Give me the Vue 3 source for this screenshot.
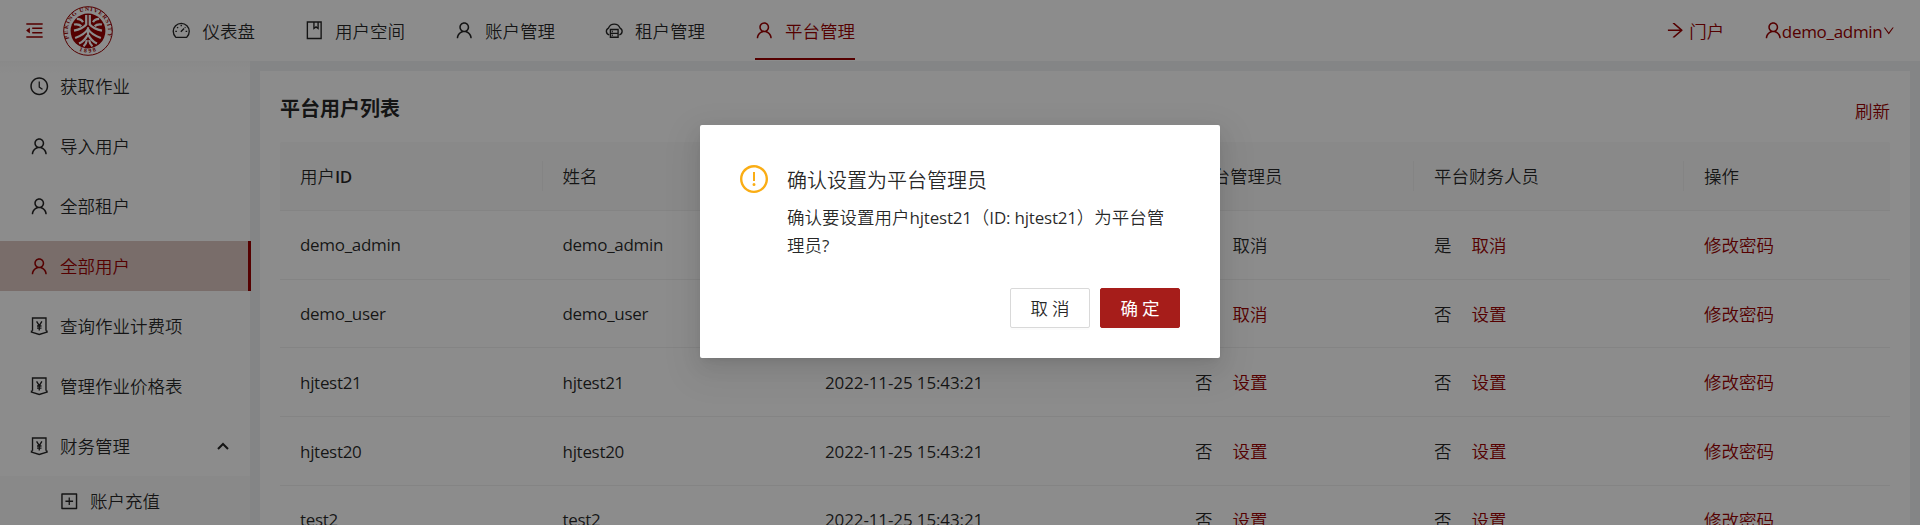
<script setup>
import { h } from 'vue'

const ring = 'M512 64C264.6 64 64 264.6 64 512s200.6 448 448 448 448-200.6 448-448S759.4 64 512 64zm0 820c-205.4 0-372-166.6-372-372s166.6-372 372-372 372 166.6 372 372-166.6 372-372 372z'
const filled = {
  user: 'M858.5 763.6a374 374 0 00-80.6-119.5 375.63 375.63 0 00-119.5-80.6c-.4-.2-.8-.3-1.2-.5C719.5 518 760 444.7 760 362c0-137-111-248-248-248S264 225 264 362c0 82.7 40.5 156 102.8 201.1-.4.2-.8.3-1.2.5-44.8 18.9-85 46-119.5 80.6a375.63 375.63 0 00-80.6 119.5A371.7 371.7 0 00136 901.8a8 8 0 008 8.2h60c4.4 0 7.9-3.5 8-7.8 2-77.2 33-149.5 87.8-204.3 56.7-56.7 132-87.9 212.2-87.9s155.5 31.2 212.2 87.9C779 752.7 810 825 812 902.2c.1 4.4 3.6 7.8 8 7.8h60a8 8 0 008-8.2c-1-47.8-10.9-94.3-29.5-138.2zM512 534c-45.9 0-89.1-17.9-121.6-50.4S340 407.9 340 362c0-45.9 17.9-89.1 50.4-121.6S466.1 190 512 190s89.1 17.9 121.6 50.4S684 316.1 684 362c0 45.9-17.9 89.1-50.4 121.6S557.9 534 512 534z',
  clock: ring + 'M686.7 638.6L544.1 535.5V288c0-4.4-3.6-8-8-8H488c-4.4 0-8 3.6-8 8v275.4c0 2.6 1.2 5 3.3 6.5l165.4 120.6c3.6 2.6 8.6 1.8 11.2-1.7l28.6-39c2.6-3.7 1.8-8.7-1.8-11.2z',
  warning: ring + 'M464 688a48 48 0 1096 0 48 48 0 10-96 0zm24-112h48c4.4 0 8-3.6 8-8V296c0-4.4-3.6-8-8-8h-48c-4.4 0-8 3.6-8 8v272c0 4.4 3.6 8 8 8z',
  plus: 'M328 544h152v152c0 4.4 3.6 8 8 8h48c4.4 0 8-3.6 8-8V544h152c4.4 0 8-3.6 8-8v-48c0-4.4-3.6-8-8-8H544V328c0-4.4-3.6-8-8-8h-48c-4.4 0-8 3.6-8 8v152H328c-4.4 0-8 3.6-8 8v48c0 4.4 3.6 8 8 8zM880 112H144c-17.7 0-32 14.3-32 32v736c0 17.7 14.3 32 32 32h736c17.7 0 32-14.3 32-32V144c0-17.7-14.3-32-32-32zm-40 728H184V184h656v656z',
  down: 'M884 256h-75c-5.1 0-9.9 2.5-12.9 6.6L512 654.2 227.9 262.6c-3-4.1-7.8-6.6-12.9-6.6h-75c-6.5 0-10.3 7.4-6.5 12.7l352.6 486.1c12.8 17.6 39 17.6 51.7 0l352.6-486.1c3.9-5.3.1-12.7-6.4-12.7z',
  arrow: 'M869 487.8L491.2 159.9c-2.9-2.5-6.6-3.9-10.5-3.9h-88.5c-7.4 0-10.8 9.2-5.2 14l350.2 304H152c-4.4 0-8 3.6-8 8v60c0 4.4 3.6 8 8 8h585.1L386.9 854c-5.6 4.9-2.2 14 5.2 14h91.5c1.9 0 3.8-.7 5.2-2L869 536.2a32.07 32.07 0 000-48.4z',
  fold: 'M408 442h480c4.4 0 8-3.6 8-8v-56c0-4.4-3.6-8-8-8H408c-4.4 0-8 3.6-8 8v56c0 4.4 3.6 8 8 8zm-8 204c0 4.4 3.6 8 8 8h480c4.4 0 8-3.6 8-8v-56c0-4.4-3.6-8-8-8H408c-4.4 0-8 3.6-8 8v56zm504-486H120c-4.4 0-8 3.6-8 8v56c0 4.4 3.6 8 8 8h784c4.4 0 8-3.6 8-8v-56c0-4.4-3.6-8-8-8zm0 632H120c-4.4 0-8 3.6-8 8v56c0 4.4 3.6 8 8 8h784c4.4 0 8-3.6 8-8v-56c0-4.4-3.6-8-8-8zM115.4 518.9L271.7 642c5.8 4.6 14.4.5 14.4-6.9V388.9c0-7.4-8.5-11.5-14.4-6.9L115.4 505.1a8.74 8.74 0 000 13.8z',
}
const stroked = {
  dashboard: 'M270 868Q250 868 230 850A400 400 0 1 1 794 850Q774 868 754 868ZM490 590L655 425M512 235v75M215 570h80M729 570h80M305 355l50 50M719 355l-30 30',
  book: 'M168 100H856V924H168ZM496 100V424L600 345L704 424V100',
  cloud: 'M260 740A180 180 0 0 1 225 400A310 310 0 0 1 799 400A180 180 0 0 1 764 740M320 476H704V860H320ZM320 668H704M390 572H440M390 764H440',
  money: 'M176 740V100H848V740M90 765L176 740M934 765L848 740M90 790L512 924L934 790M380 270L512 480L644 270M512 480V720M400 500H624M400 605H624',
}
const Icon = (props) =>
  h('svg', { viewBox: '0 0 1024 1024', class: 'icon' }, [
    filled[props.name]
      ? h('path', { d: filled[props.name], fill: 'currentColor' })
      : h('path', { d: stroked[props.name], fill: 'none', stroke: 'currentColor', 'stroke-width': 68 }),
  ])
Icon.props = ['name']

const nav = [
  { icon: 'dashboard', label: '仪表盘' },
  { icon: 'book', label: '用户空间' },
  { icon: 'user', label: '账户管理' },
  { icon: 'cloud', label: '租户管理' },
  { icon: 'user', label: '平台管理', active: true },
]
const side = [
  { icon: 'clock', label: '获取作业' },
  { icon: 'user', label: '导入用户' },
  { icon: 'user', label: '全部租户' },
  { icon: 'user', label: '全部用户', active: true },
  { icon: 'money', label: '查询作业计费项' },
  { icon: 'money', label: '管理作业价格表' },
]
const columns = ['姓名', '创建时间', '平台管理员', '平台财务人员', '操作']
const created = '2022-11-25 15:43:21'
const rows = [
  { id: 'demo_admin', admin: true, finance: true, self: true },
  { id: 'demo_user', admin: true, finance: false },
  { id: 'hjtest21', admin: false, finance: false },
  { id: 'hjtest20', admin: false, finance: false },
  { id: 'test2', admin: false, finance: false },
]
</script>

<template>
  <div class="page">
    <header class="header">
      <Icon name="fold" class="fold red" />
      <svg class="logo" viewBox="0 0 50 50">
        <defs>
          <path id="sealTop" d="M6.2 32.5A20.2 20.2 0 1 1 43.8 32.5" />
          <path id="sealBottom" d="M12 42.3A22 22 0 0 0 38 42.3" />
        </defs>
        <circle cx="25" cy="25" r="24.3" fill="#fff" stroke="#9b0000" stroke-width="1" />
        <circle cx="25" cy="25" r="17.4" fill="#9b0000" />
        <text class="seal"><textPath href="#sealTop" textLength="76">PEKING UNIVERSITY</textPath></text>
        <text class="seal year"><textPath href="#sealBottom" startOffset="17%">1898</textPath></text>
        <g fill="none" stroke="#fff" stroke-width="2" transform="translate(25 25) scale(1.12) translate(-25 -25.3)">
          <path d="M23.4 11V19.5Q20 23.5 12.5 25M26.6 11V19.5Q30 23.5 37.5 25" />
          <path d="M15 14.5Q19 14.5 20.5 17.5M35 14.5Q31 14.5 29.5 17.5M12.5 19.5Q17 18.7 19 21M37.5 19.5Q33 18.7 31 21" />
          <path d="M25 22V30M25 23.5Q22 28.5 13.5 31.5M25 23.5Q28 28.5 36.5 31.5" />
          <path d="M24.5 29Q22 34 17 36.5M25.5 29Q28 34 33 36.5M24 33.5Q23.5 37 21 39M26 33.5Q26.5 37 29 39" />
        </g>
      </svg>
      <nav class="nav">
        <a v-for="n in nav" :key="n.label" class="nav-item" :class="{ active: n.active }">
          <Icon :name="n.icon" /><span class="label">{{ n.label }}</span>
        </a>
      </nav>
      <div class="portal red"><Icon name="arrow" /><span class="label">门户</span></div>
      <div class="account red"><Icon name="user" /><span class="label latin">demo_admin</span><Icon name="down" class="small" /></div>
    </header>

    <div class="body">
      <aside class="side">
        <div v-for="s in side" :key="s.label" class="side-item" :class="{ active: s.active }">
          <Icon :name="s.icon" /><span class="label">{{ s.label }}</span>
        </div>
        <div class="side-item group">
          <Icon name="money" /><span class="label">财务管理</span>
          <svg class="caret" viewBox="0 0 12 8"><path d="M1 7L6 2L11 7" fill="none" stroke="currentColor" stroke-width="2" /></svg>
        </div>
        <div class="sub"><Icon name="plus" /><span class="label">账户充值</span></div>
      </aside>

      <main class="main">
        <section class="card">
          <div class="card-head">
            <h1>平台用户列表</h1>
            <a class="refresh red">刷新</a>
          </div>
          <div class="tr thead">
            <div class="cell">用户<span class="id-mark">ID</span></div>
            <div v-for="c in columns" :key="c" class="cell">{{ c }}</div>
          </div>
          <div v-for="r in rows" :key="r.id" class="tr">
            <div class="cell latin">{{ r.id }}</div>
            <div class="cell latin">{{ r.id }}</div>
            <div class="cell latin date">{{ created }}</div>
            <div class="cell flag">
              <span>{{ r.admin ? '是' : '否' }}</span>
              <a :class="{ red: !r.self }">{{ r.admin ? '取消' : '设置' }}</a>
            </div>
            <div class="cell flag">
              <span>{{ r.finance ? '是' : '否' }}</span>
              <a class="red">{{ r.finance ? '取消' : '设置' }}</a>
            </div>
            <div class="cell red">修改密码</div>
          </div>
        </section>
      </main>
    </div>

    <div class="mask">
      <div class="modal" role="dialog">
        <div class="modal-body">
          <Icon name="warning" class="warn" />
          <div class="modal-text">
            <h2>确认设置为平台管理员</h2>
            <p>确认要设置用户<span class="latin">hjtest21</span>（<span class="latin">ID: hjtest21</span>）为平台管理员<span class="latin">?</span></p>
          </div>
        </div>
        <div class="buttons">
          <button>取消</button>
          <button class="primary">确定</button>
        </div>
      </div>
    </div>
  </div>
</template>

<style>
body {
  overflow: hidden;
}
</style>

<style scoped>
.page {
  position: relative;
  width: 1920px;
  height: 525px;
  overflow: hidden;
  display: flex;
  flex-direction: column;
  background: #f0f2f5;
  color: rgba(0, 0, 0, 0.85);
  font: 350 17.5px/27.5px "Open Sans", "Noto Sans CJK SC", sans-serif;
  white-space: nowrap;
}
.page * {
  box-sizing: border-box;
}
.icon {
  display: block;
  flex: none;
  width: 20.5px;
  height: 20.5px;
  margin: 0 -1.5px;
}
.label {
  padding-top: 2px;
}
.red {
  color: #9b0000;
}
.latin {
  font-size: 17px;
  font-weight: 400;
  letter-spacing: -0.3px;
}
.id-mark {
  font-size: 17px;
  font-weight: 600;
  letter-spacing: -0.4px;
}
.header {
  flex: none;
  height: 61px;
  display: flex;
  align-items: center;
  padding: 0 25px;
  background: #fff;
}
.fold {
  width: 21px;
  height: 21px;
  margin: 0 0 0 -1.5px;
}
.logo {
  width: 50px;
  height: 50px;
  margin-left: 18.5px;
}
.seal {
  font: 700 5.8px "Liberation Serif", serif;
  fill: #9b0000;
}
.year {
  letter-spacing: 2px;
}
.nav {
  display: flex;
  margin-left: 34.5px;
}
.nav-item {
  display: flex;
  align-items: center;
  gap: 12.5px;
  height: 59px;
  margin: 0 25px;
  padding-top: 2px;
  border-bottom: 2px solid transparent;
}
.nav-item.active {
  color: #9b0000;
  border-color: #9b0000;
}
.portal {
  display: flex;
  align-items: center;
  gap: 5px;
  margin-left: auto;
  margin-right: 40px;
}
.account {
  display: flex;
  align-items: center;
}
.small {
  width: 13.5px;
  height: 13.5px;
  margin: 0 -0.5px;
}
.body {
  flex: 1;
  min-height: 0;
  display: flex;
}
.side {
  width: 250px;
  flex: none;
  background: linear-gradient(#fafafa, #fff 12px);
}
.side-item {
  display: flex;
  align-items: center;
  gap: 12.5px;
  height: 50px;
  padding-left: 30px;
  margin-bottom: 10px;
}
.side-item.active {
  width: 251px;
  color: #9b0000;
  background: #dcc6c1;
  border-right: 3px solid #9b0000;
}
.group {
  margin-bottom: 5px;
}
.caret {
  width: 12px;
  height: 8px;
  margin-left: auto;
  margin-right: 21px;
}
.sub {
  display: flex;
  align-items: center;
  gap: 12.5px;
  height: 50px;
  padding-left: 60px;
  background: #fafafa;
}
.main {
  flex: 1;
  padding: 10px 10px 0;
}
.card {
  height: 454px;
  padding: 0 20px;
  background: #fff;
  overflow: hidden;
}
.card-head {
  display: flex;
  justify-content: space-between;
  height: 71px;
}
h1 {
  margin: 23px 0 0;
  font-size: 20px;
  line-height: 30px;
  font-weight: 700;
}
.refresh {
  margin-top: 27px;
}
.tr {
  display: grid;
  grid-template-columns: 262.5px 262.5px 370px 239px 270px 206px;
  height: 68.75px;
  align-items: center;
  border-bottom: 1px solid #f0f0f0;
}
.thead {
  background: #fafafa;
  border-radius: 2px 2px 0 0;
}
.cell {
  padding: 2px 0 0 20px;
}
.cell.latin {
  padding-top: 1px;
}
.date {
  letter-spacing: -0.12px;
}
.thead .cell {
  box-shadow: -1px 0 0 #f0f0f0;
}
.thead .cell:first-child {
  box-shadow: none;
}
.flag {
  display: flex;
  gap: 20px;
}
.mask {
  position: absolute;
  inset: 0;
  background: rgba(0, 0, 0, 0.45);
  display: flex;
  justify-content: center;
  align-items: flex-start;
  padding-top: 125px;
}
.modal {
  width: 520px;
  height: 233px;
  padding: 40px 40px 30px;
  display: flex;
  flex-direction: column;
  background: #fff;
  border-radius: 2px;
  box-shadow: 0 4px 8px -5px rgba(0, 0, 0, 0.12), 0 8px 20px rgba(0, 0, 0, 0.08), 0 12px 35px 10px rgba(0, 0, 0, 0.05);
}
.modal-body {
  display: flex;
  gap: 17px;
}
.warn {
  width: 32px;
  height: 32px;
  margin: -2px 0 0 -2px;
  color: #faad14;
}
h2 {
  margin: 2px 0 0;
  font-size: 20px;
  line-height: 28px;
  font-weight: 350;
}
p {
  margin: 9px 0 0;
  width: 385px;
  white-space: normal;
}
p .latin {
  letter-spacing: -0.2px;
}
.buttons {
  display: flex;
  justify-content: flex-end;
  gap: 10px;
  margin-top: auto;
}
button {
  width: 80px;
  height: 40px;
  padding: 2px 0 0 4px;
  border: 1px solid #d9d9d9;
  border-radius: 2px;
  background: #fff;
  color: inherit;
  font: inherit;
  letter-spacing: 4px;
  box-shadow: 0 2px 0 rgba(0, 0, 0, 0.016);
}
.primary {
  border-color: #a61d1a;
  background: #a61d1a;
  color: #fff;
  font-weight: 400;
}
</style>
